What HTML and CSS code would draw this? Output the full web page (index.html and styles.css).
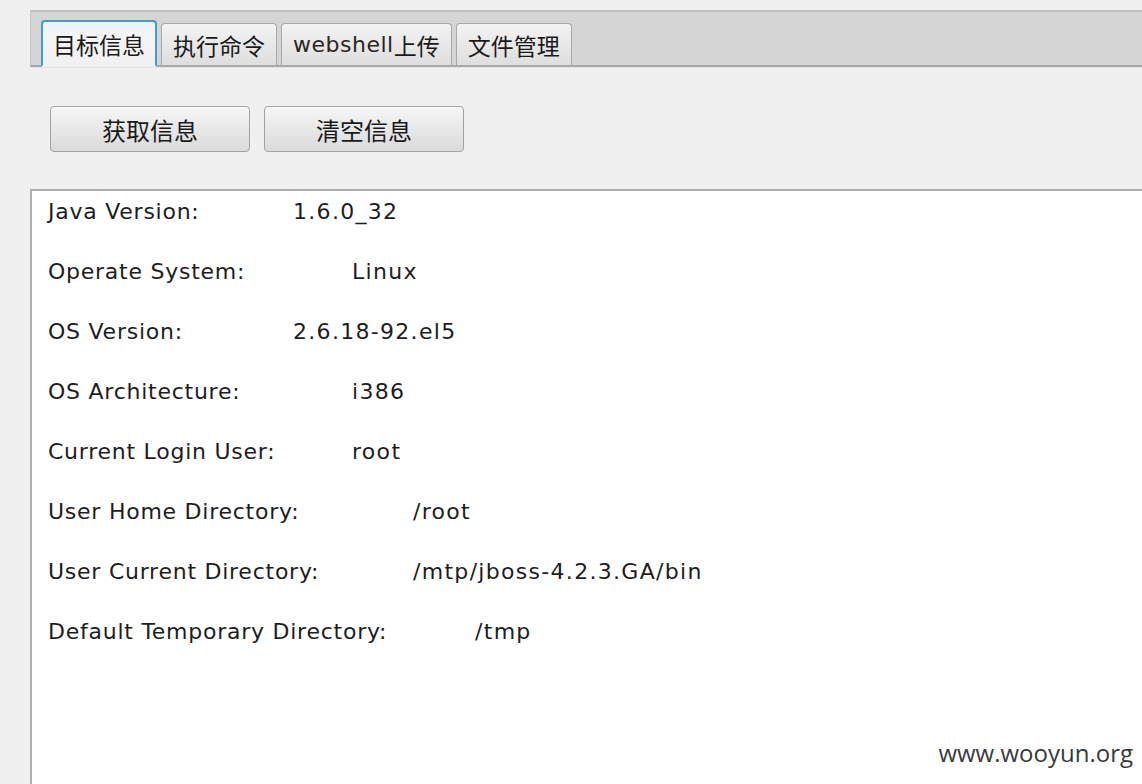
FILE: index.html
```html
<!DOCTYPE html>
<html lang="zh">
<head>
<meta charset="utf-8">
<title>目标信息</title>
<link rel="stylesheet" href="styles.css">
</head>
<body>
<div class="app">
  <div class="tabstrip">
    <div class="tab active">目标信息</div>
    <div class="tab">执行命令</div>
    <div class="tab"><span class="latin">webshell</span>上传</div>
    <div class="tab">文件管理</div>
  </div>
  <div class="toolbar">
    <button class="btn">获取信息</button>
    <button class="btn">清空信息</button>
  </div>
  <div class="output">
    <div class="row"><span class="key k4">Java Version:</span><span class="val">1.6.0_32</span></div>
    <div class="row"><span class="key k5">Operate System:</span><span class="val">Linux</span></div>
    <div class="row"><span class="key k4">OS Version:</span><span class="val">2.6.18-92.el5</span></div>
    <div class="row"><span class="key k5">OS Architecture:</span><span class="val">i386</span></div>
    <div class="row"><span class="key k5">Current Login User:</span><span class="val">root</span></div>
    <div class="row"><span class="key k6">User Home Directory:</span><span class="val">/root</span></div>
    <div class="row"><span class="key k6">User Current Directory:</span><span class="val">/mtp/jboss-4.2.3.GA/bin</span></div>
    <div class="row"><span class="key k7">Default Temporary Directory:</span><span class="val">/tmp</span></div>
  </div>
</div>
<div class="watermark">www.wooyun.org</div>
</body>
</html>
```

FILE: styles.css
```css
html, body {
  margin: 0;
  padding: 0;
  height: 100%;
  overflow: hidden;
}
body {
  background: #f0f0f0;
  font-family: "DejaVu Sans", "Noto Sans CJK SC", sans-serif;
  color: #1d1d1f;
}
.app {
  padding: 10px 0 0 30px;
  display: flex;
  flex-direction: column;
  height: 100%;
  box-sizing: border-box;
}
.tabstrip {
  display: flex;
  align-items: flex-end;
  gap: 4px;
  height: 57px;
  box-sizing: border-box;
  padding-left: 10px;
  background: #d5d5d5;
  border-top: 2px solid #c2c2c2;
  border-left: 1px solid #c4c4c4;
  border-bottom: 2px solid #a9a9a9;
  box-shadow: 0 1px 0 #e4e4e4;
}
.tab {
  height: 44px;
  margin-bottom: -2px;
  padding: 0 11px;
  box-sizing: border-box;
  display: flex;
  align-items: center;
  font-family: "Noto Sans CJK SC", sans-serif;
  font-size: 23px;
  color: #1a1a1a;
  background: linear-gradient(#f3f3f3, #dedede);
  border: 1px solid #a8a8a8;
  border-bottom: 2px solid #a9a9a9;
  border-radius: 4px 4px 0 0;
}
.tab .latin {
  font-family: "DejaVu Sans", sans-serif;
  font-size: 22px;
  letter-spacing: 0.5px;
  color: #2a2622;
}
.tab.active {
  height: 47px;
  padding: 0 10px;
  background: linear-gradient(#e8f3fb, #f5f5f5 30%, #f0f0f0);
  border: 2px solid #3c9ed3;
  border-bottom: 2px solid #f0f0f0;
}
.toolbar {
  display: flex;
  gap: 14px;
  padding: 39px 0 0 20px;
}
.btn {
  width: 200px;
  height: 46px;
  margin: 0;
  font-family: "Noto Sans CJK SC", sans-serif;
  font-size: 24px;
  color: #1a1a1a;
  background: linear-gradient(#f6f6f6, #dadada);
  border: 1px solid #a2a2a2;
  border-radius: 4px;
  box-shadow: inset 0 1px 0 #fff;
  padding: 0;
}
.output {
  margin-top: 37px;
  flex: 1;
  background: #fff;
  border-top: 2px solid #adadad;
  border-left: 2px solid #b0b0b0;
  padding: 1px 0 0 16px;
  font-size: 22px;
  letter-spacing: 0.75px;
  display: flex;
  flex-direction: column;
  gap: 20px;
}
.row {
  display: flex;
  line-height: 40px;
  height: 40px;
  white-space: nowrap;
}
.key { flex: none; }
.val { letter-spacing: 1.3px; }
.k4 { width: 245px; }
.k5 { width: 304px; }
.k6 { width: 365px; }
.k7 { width: 427px; }
.watermark {
  position: absolute;
  right: 9px;
  bottom: 15px;
  font-family: "Open Sans", sans-serif;
  font-size: 24px;
  color: #3a3a3a;
}
```
